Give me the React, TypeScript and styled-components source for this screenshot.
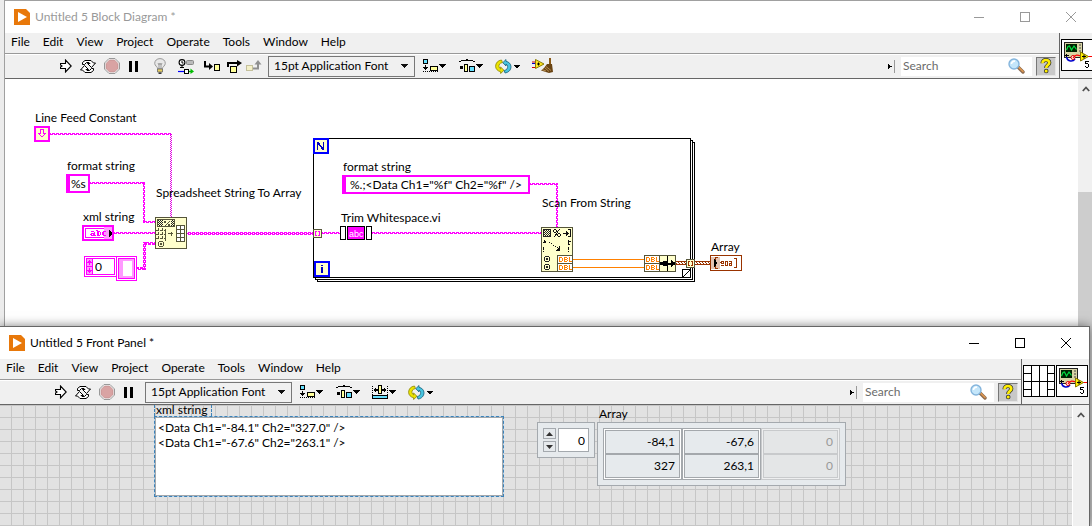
import React from 'react';
import styled, { createGlobalStyle, css } from 'styled-components';

const MAGENTA = '#ff00ff';
const NODE_FILL = '#ffffcc';
const NODE_EDGE = '#55553a';
const BROWN = '#993300';
const ORANGE = '#ff8000';
const BLUE = '#0000ff';

const GlobalStyle = createGlobalStyle`
  * { box-sizing: border-box; }
  body {
    margin: 0;
    background: #c4c4c4;
    font-family: Lato, 'Open Sans', sans-serif;
    font-size: 12px;
    line-height: 16px;
    color: #000;
  }
  button, input, select, textarea { font: inherit; color: inherit; }
`;

/* ---------- windows ---------- */

const Desktop = styled.main`
  position: relative;
  min-height: 100vh;
  overflow: hidden;
  background: #ececec;
`;

const WindowFrame = styled.section<{ $active?: boolean; $x: number; $right: number; $y: number }>`
  position: absolute;
  left: ${p => p.$x}px;
  right: ${p => p.$right}px;
  top: ${p => p.$y}px;
  bottom: 0;
  display: flex;
  flex-direction: column;
  border: 1px solid ${p => (p.$active ? '#666' : '#a0a0a0')};
  border-bottom: 0;
  background: #f0f0f0;
  ${p => p.$active && css`box-shadow: 0 0 10px rgba(0, 0, 0, 0.5);`}
`;

const TitleBar = styled.header<{ $active?: boolean }>`
  display: flex;
  align-items: center;
  height: 32px;
  flex: none;
  padding-left: 9px;
  background: #fff;
  color: ${p => (p.$active ? '#000' : '#999')};
`;

const Title = styled.h1`
  flex: 1;
  margin: 0 0 0 5px;
  font-size: 12px;
  font-weight: 400;
`;

const CaptionButton = styled.button`
  display: flex;
  align-items: center;
  justify-content: center;
  width: 46px;
  height: 32px;
  padding: 0;
  border: 0;
  background: none;
`;

const HeaderRow = styled.div`
  display: flex;
  flex: none;
  height: 46px;
  border-bottom: 1px solid #666;
`;

const HeaderBars = styled.div`
  flex: 1;
  min-width: 0;
`;

const MenuBar = styled.nav`
  display: flex;
  gap: 13px;
  height: 20px;
  padding: 1px 0 0 6px;
`;

const MenuItem = styled.a`
  color: #000;
  text-decoration: none;
`;

const ToolBar = styled.div`
  display: flex;
  align-items: center;
  height: 25px;
  padding-left: 51px;
  border-top: 1px solid #999;
  box-shadow: inset 0 1px #fff;
`;

const ToolButton = styled.button<{ $w: number }>`
  display: flex;
  align-items: center;
  justify-content: center;
  width: ${p => p.$w}px;
  height: 22px;
  flex: none;
  padding: 0;
  border: 0;
  background: none;
`;

const ToolGap = styled.span<{ $w: number }>`
  flex: none;
  width: ${p => p.$w}px;
`;

const FontPicker = styled.span`
  position: relative;
  flex: none;
  width: 147px;
  height: 21px;
  svg { position: absolute; right: 7px; top: 8px; pointer-events: none; }
`;

const FontSelect = styled.select`
  appearance: none;
  width: 100%;
  height: 100%;
  padding: 0 20px 0 5px;
  border: 1px solid #777;
  border-radius: 0;
  background: #f0f0f0;
`;

const SearchArea = styled.div`
  display: flex;
  align-items: center;
  margin-left: auto;
  padding-right: 3px;
`;

const SearchBox = styled.label`
  display: flex;
  align-items: center;
  width: 131px;
  height: 19px;
  margin: 0 4px 0 5px;
  padding-right: 7px;
  background: #fff;
`;

const SearchInput = styled.input`
  flex: 1;
  min-width: 0;
  padding: 0 0 0 2px;
  border: 0;
  outline: 0;
  background: none;
  &::placeholder { color: #6b6b6b; opacity: 1; }
`;

const HelpButton = styled.button`
  display: flex;
  align-items: center;
  justify-content: center;
  width: 20px;
  height: 19px;
  padding: 0;
  border: 1px solid;
  border-color: #777 #e4e4e4 #e4e4e4 #777;
  background: #c8c8c8;
`;

const IconPanes = styled.div`
  display: flex;
  gap: 1px;
  flex: none;
  padding: 6px 1px 0 1px;
  border-left: 1px solid #666;
`;

const Body = styled.div`
  display: flex;
  flex: 1;
  min-height: 0;
`;

const ScrollTrack = styled.div`
  flex: none;
  display: flex;
  flex-direction: column;
  align-items: center;
  width: 17px;
  padding-top: 7px;
  border-left: 1px solid #fff;
  background: #f0f0f0;
`;

const ScrollThumb = styled.div`
  align-self: stretch;
  flex: 1;
  margin-top: 100px;
  background: #cdcdcd;
`;

/* ---------- block diagram ---------- */

const Diagram = styled.div`
  position: relative;
  flex: 1;
  min-width: 0;
  overflow: hidden;
  background: #fff;
`;

const DiagramDrawing = styled.svg`
  position: absolute;
  left: 0;
  top: 0;
  display: block;
`;

const NodeLabel = styled.span<{ $x: number; $y: number }>`
  position: absolute;
  left: ${p => p.$x}px;
  top: ${p => p.$y}px;
  white-space: nowrap;
`;

const StringConstant = styled.input<{ $x: number; $y: number; $w: number; $pad: number }>`
  position: absolute;
  left: ${p => p.$x}px;
  top: ${p => p.$y}px;
  width: ${p => p.$w}px;
  height: 19px;
  padding: 0 0 0 ${p => p.$pad}px;
  border: 2px solid ${MAGENTA};
  border-left-width: 4px;
  border-radius: 0;
  outline: 0;
  background: #fff;
`;

const IndexConstant = styled.input`
  position: absolute;
  left: 89px;
  top: 180px;
  width: 20px;
  height: 16px;
  padding: 0 0 0 1px;
  border: 0;
  outline: 0;
  background: none;
`;

/* ---------- front panel ---------- */

const Panel = styled.div`
  position: relative;
  flex: 1;
  min-width: 0;
  background-color: #e2e2e2;
  background-image:
    linear-gradient(to right, transparent 11px, #c6c6c6 11px),
    linear-gradient(to bottom, transparent 11px, #c6c6c6 11px);
  background-size: 12px 12px;
  background-position: 0 1px;
`;

const PanelItem = styled.div<{ $x: number; $y: number }>`
  position: absolute;
  left: ${p => p.$x}px;
  top: ${p => p.$y}px;
`;

const XmlLabel = styled.label`
  display: block;
  width: 58px;
  height: 11px;
  padding-left: 1px;
  line-height: 9px;
  border: 1px dashed #3c82b8;
  border-top: 0;
  border-bottom: 0;
  white-space: nowrap;
`;

const XmlFrame = styled.div`
  width: 350px;
  height: 81px;
  border: 1px dashed #3c82b8;
  background: #b8d4ea;
`;

const XmlText = styled.textarea`
  display: block;
  width: 100%;
  height: 100%;
  padding: 2px;
  border: 1px solid #a4a8ac;
  outline: 0;
  resize: none;
  overflow: hidden;
  line-height: 15px;
  background: #fff;
`;

const IndexFrame = styled.div`
  display: flex;
  gap: 2px;
  width: 58px;
  height: 36px;
  padding: 5px;
  border: 1px solid #a4a9ae;
  background: #e6eaed;
`;

const Spinner = styled.div`
  display: flex;
  flex-direction: column;
  gap: 2px;
`;

const SpinButton = styled.button`
  display: flex;
  align-items: center;
  justify-content: center;
  width: 13px;
  height: 11px;
  padding: 0;
  border: 1px solid #a4a9ae;
  background: #e6eaed;
`;

const IndexInput = styled.input`
  width: 31px;
  height: 24px;
  padding: 0 3px;
  border: 1px solid #a4a9ae;
  border-radius: 0;
  outline: 0;
  background: #fff;
  text-align: right;
`;

const ArrayFrame = styled.div`
  padding: 5px;
  border: 1px solid #a4a9ae;
  background: #e6eaed;
`;

const ArrayTable = styled.table`
  border-collapse: separate;
  border-spacing: 0;
`;

const ArrayCell = styled.td<{ $dim?: boolean }>`
  width: 79px;
  padding: 0 1px;
  border: 0 solid ${p => (p.$dim ? '#c8cacc' : '#a4a8ac')};
  border-width: 0 1px;
  background: ${p => (p.$dim ? '#eeeff0' : '#fff')};
  tr:first-child > & { border-top-width: 1px; padding-top: 1px; }
  tr:last-child > & { border-bottom-width: 1px; padding-bottom: 1px; }
`;

const CellValue = styled.div<{ $dim?: boolean }>`
  height: 24px;
  padding: 3px 4px 0;
  border: 1px solid ${p => (p.$dim ? '#c8cacc' : '#a4a8ac')};
  background: ${p => (p.$dim ? '#e4e6e7' : '#e6eaed')};
  color: ${p => (p.$dim ? '#999' : '#000')};
  text-align: right;
`;

/* ---------- icons ---------- */

const px = { shapeRendering: 'crispEdges' as const };

/** Draws a small bitmap: each character of a row is looked up in the palette. */
function Bitmap({ rows, palette, x = 0, y = 0 }: {
  rows: string[]; palette: Record<string, string>; x?: number; y?: number;
}) {
  return (
    <g {...px}>
      {rows.flatMap((row, j) =>
        [...row].map((c, i) =>
          palette[c] ? <rect key={`${i}-${j}`} x={x + i} y={y + j} width="1" height="1" fill={palette[c]} /> : null,
        ),
      )}
    </g>
  );
}

const AppLogo = () => (
  <svg width="16" height="16" viewBox="0 0 16 16">
    <path d="M0 0H12L16 4V16H0Z" fill="#e8780a" />
    <path d="M4 3L13 8L4 13Z" fill="#fff" />
  </svg>
);

const DropArrow = () => (
  <svg width="7" height="4" viewBox="0 0 7 4" {...px}><path d="M0 0H7L3.5 4Z" fill="#111" /></svg>
);

const RunIcon = () => (
  <svg width="12" height="14" viewBox="0 0 12 14">
    <path d="M0.5 4.5H5.5V1L11.2 7L5.5 13V9.5H0.5V8L2 7L0.5 6Z" fill="#fff" stroke="#000" strokeWidth="1.1" />
  </svg>
);

const RunLoopIcon = () => (
  <svg width="16" height="15" viewBox="0 0 16 15" fill="#fff" stroke="#000" strokeWidth="1">
    <path d="M2.5 5.500V3.500L5 1.5H11L13.500 4H15.500L11.500 8.500L7.500 4.500H10L9 3.500H6.500L4.500 5.500Z" />
    <path d="M13.500 9.500V11.500L11 13.5H5L2.500 11H.5L4.500 6.500L8.500 10.5H6L7 11.5H9.500L11.500 9.500Z" />
  </svg>
);

const AbortIcon = () => (
  <svg width="16" height="16" viewBox="0 0 16 16">
    <path d="M5 .5H11L15.5 5V11L11 15.5H5L.5 11V5Z" fill="#f4f4f4" stroke="#999" />
    <path d="M5.5 2H10.5L14 5.5V10.5L10.5 14H5.5L2 10.5V5.5Z" fill="#d9a3a3" stroke="#b88" strokeWidth=".6" />
  </svg>
);

const PauseIcon = () => (
  <svg width="10" height="11" viewBox="0 0 10 11" {...px}><path d="M0 0H3V11H0ZM6 0H9V11H6Z" /></svg>
);

const BulbIcon = () => (
  <svg width="12" height="16" viewBox="0 0 12 16">
    <path d="M6 .6C2.8 .6 .7 2.8 .7 5.3C.7 7.8 3.5 8.6 3.8 11H8.2C8.5 8.6 11.3 7.8 11.3 5.3C11.3 2.8 9.2 .6 6 .6Z" fill="#e8e8e8" stroke="#999" />
    <path d="M4 5L5 7L6 5L7 7L8 5M5 7V11M7 7V11" stroke="#888" strokeWidth=".8" fill="none" />
    <path d="M3.5 11H8.5V14H3.5Z" fill="#e8d060" stroke="#666" strokeWidth=".8" />
    <path d="M4.5 15.2H7.5" stroke="#222" strokeWidth="1.4" />
  </svg>
);

const RetainIcon = () => (
  <svg width="16" height="15" viewBox="0 0 16 15">
    <circle cx="4" cy="3.500" r="2.900" fill="#fff" stroke="#000" strokeWidth="1.1" />
    <path d="M4 2V4H5.5M2 8.5H6M4 6.500V9" stroke="#000" fill="none" />
    <rect x="8.5" y="1.5" width="7" height="4" rx="1" fill="#bbb" stroke="#888" />
    <path d="M0 12.5H6" stroke="#00f" strokeWidth="1.2" />
    <rect x="6.5" y="10.5" width="4" height="4" fill="#fff" stroke="#000" />
    <path d="M11 12.5H14" stroke="#0a0" strokeWidth="1.4" />
    <path d="M12.5 9.5L16 12.5L12.5 15Z" fill="#0b0" />
  </svg>
);

const StepIntoIcon = () => (
  <svg width="16" height="12" viewBox="0 0 16 12">
    <path d="M1 1V6.5H6" fill="none" stroke="#000" strokeWidth="2" />
    <path d="M5 3L9 6.5L5 10Z" />
    <rect x="10.5" y="4.5" width="5" height="6" fill="#ffff99" stroke="#000" />
  </svg>
);

const StepOverIcon = () => (
  <svg width="15" height="13" viewBox="0 0 15 13">
    <path d="M1 7V3H11" fill="none" stroke="#000" strokeWidth="2" />
    <path d="M10 0L15 3L10 6.5Z" />
    <rect x="3.5" y="6.5" width="6" height="6" fill="#ffff99" stroke="#000" />
  </svg>
);

const StepOutIcon = () => (
  <svg width="16" height="12" viewBox="0 0 16 12">
    <rect x=".5" y="5.5" width="6" height="5" fill="#f4f0c8" stroke="#c4c09c" />
    <path d="M7 8.5H12V4" fill="none" stroke="#909090" strokeWidth="2" />
    <path d="M8.5 4.5L12 0L15.5 4.5Z" fill="#909090" />
  </svg>
);

const AlignIcon = () => (
  <svg width="24" height="14" viewBox="0 0 24 14" {...px}>
    <rect x=".5" y=".5" width="4" height="4" fill="#66e0ff" stroke="#000" />
    <path d="M2 6H3V8H5V9H4V10H3V11H2V10H1V9H0V8H2Z" />
    <path d="M0 12.5H15" stroke="#000" strokeDasharray="1 1" />
    <rect x="7.5" y="7.5" width="7" height="4" fill="#ffff99" stroke="#000" />
    <path d="M16 5H23L19.5 9Z" />
  </svg>
);

const DistributeIcon = () => (
  <svg width="24" height="14" viewBox="0 0 24 14" {...px}>
    <path d="M0 3V2H2V1H7V0H9V1H14V2H16V3H14V2H2V3Z" />
    <rect x="1" y="7" width="3" height="3" />
    <rect x="5.500" y="5.500" width="3" height="7" fill="#ffff99" stroke="#000" />
    <rect x="10.500" y="7.500" width="5" height="5" fill="#66e0ff" stroke="#000" />
    <path d="M17 5H24L20.500 9Z" />
  </svg>
);

const ResizeIcon = () => (
  <svg width="24" height="14" viewBox="0 0 24 14" {...px}>
    <path d="M.5 1V10M15.500 1V10" stroke="#000" strokeDasharray="1 1" />
    <path d="M1 5H2V4H3V3H4V4H6V6H4V7H3V6H2V5ZM15 5H14V4H13V3H12V4H10V6H12V7H13V6H14V5Z" />
    <rect x="6.500" y=".5" width="3" height="8" fill="#ffff99" stroke="#000" />
    <rect x=".5" y="10.500" width="15" height="3" fill="#66e0ff" stroke="#000" />
    <path d="M17 5H24L20.500 9Z" />
  </svg>
);

const ReorderIcon = () => (
  <svg width="26" height="15" viewBox="0 0 26 15">
    <path d="M6.500 1L7.500 3.500C4.500 4 3.800 6 4 7.500C4.100 8.700 4.800 9.600 5.600 10V8L9 11.300L5.600 14.500V12.700C2.800 12.200 .6 10 .6 7.300C.6 4 3 1.300 6.500 1Z" fill="#ece400" stroke="#8a8400" strokeWidth=".8" />
    <path d="M10 14L9.200 11.500C12 11 12.800 9 12.600 7.500C12.500 6.300 11.800 5.400 11 5V7L7.800 3.700L11 .5V2.300C13.800 2.800 16 5 16 7.700C16 11 13.500 13.700 10 14Z" fill="#48c4e0" stroke="#14607a" strokeWidth=".8" />
    <path d="M18.500 6H25.500L22 10Z" {...px} />
  </svg>
);

const CleanUpIcon = () => (
  <svg width="22" height="16" viewBox="0 0 22 16">
    <path d="M0 4H4M0 9.500H4" stroke="#c00" strokeWidth="1.200" />
    <path d="M0 5.500H3" stroke="#00c" />
    <path d="M3.500 1.500L12 6L3.500 10.500Z" fill="#ffe820" stroke="#8a7a00" />
    <path d="M5 6H8M6.500 4.500V7.500" stroke="#000" />
    <path d="M17 0H19V7H17Z" fill="#8a5a18" />
    <path d="M15 6H20L21 14L17 15L9 12.500L12 10Z" fill="#6a4414" />
    <path d="M10 11.500L14 13M12.500 9.500L17 13.500M14 8.500L19 12.500" stroke="#c8a060" fill="none" strokeWidth=".8" />
  </svg>
);

const MagnifierIcon = () => (
  <svg width="17" height="16" viewBox="0 0 17 16">
    <path d="M10 9L15 14" stroke="#8a6a50" strokeWidth="3.400" strokeLinecap="round" />
    <path d="M11 9.500L15 13.500" stroke="#e09850" strokeWidth="1.600" strokeLinecap="round" />
    <circle cx="6" cy="6" r="5" fill="#c4e6fa" stroke="#84b4dc" strokeWidth="1.400" />
    <path d="M3.500 6C3.500 4 5 3 7 3.200" stroke="#fff" strokeWidth="1.600" fill="none" />
  </svg>
);

const HelpIcon = () => (
  <svg width="12" height="16" viewBox="0 0 12 16">
    <path d="M2.500 5.200C2.300 1 9.500 1 9.300 4.800C9.200 7.200 6.300 7 6.200 10" fill="none" stroke="#333" strokeWidth="4" />
    <circle cx="6.200" cy="13" r="2.300" fill="#333" />
    <path d="M2.500 5.200C2.300 1 9.500 1 9.300 4.800C9.200 7.200 6.300 7 6.200 10" fill="none" stroke="#ffee00" strokeWidth="2.600" />
    <circle cx="6.200" cy="13" r="1.500" fill="#ffee00" />
  </svg>
);

const ViIcon = () => (
  <svg width="32" height="32" viewBox="0 0 32 32">
    <rect x=".5" y=".5" width="31" height="31" fill="#fff" stroke="#000" {...px} />
    <rect x="3.500" y="3.500" width="18" height="15" fill="#d8d4a4" stroke="#222" {...px} />
    <rect x="5" y="5" width="11" height="8" fill="#002200" {...px} />
    <path d="M5.500 11L7 7.500L8.500 7L10.500 11L13 7L15.500 10.500" fill="none" stroke="#00e040" strokeWidth="1.200" />
    <path d="M18 6H20M18 9H20M18 12H20" stroke="#444" />
    <path d="M5.500 15V18M3.500 16.500H8" stroke="#000" />
    <path d="M5.500 18C6.500 23 12 23 14 20" fill="none" stroke="#0000cc" strokeWidth="1.400" />
    <circle cx="12" cy="18.500" r="2" fill="#fff" stroke="#d00" />
    <path d="M12 19C14 15 17 16 20 17" fill="none" stroke="#f00" strokeWidth="1.300" />
    <path d="M27 17.500H31" stroke="#f00" {...px} />
    <path d="M19.500 13L27.500 17.500L19.500 22Z" fill="#ffee00" stroke="#8a7a00" />
    <path d="M21 17.500H25M23 15.500V19.500" stroke="#000" />
    <Bitmap x={24} y={22} palette={{ k: '#000' }} rows={['kkkk', 'k...', 'kkk.', '...k', '...k', 'k..k', '.kk.']} />
  </svg>
);

const ConnectorPane = () => (
  <svg width="32" height="32" viewBox="0 0 32 32" {...px}>
    <path d="M.5 .5H31.500V31.500H.5ZM8.500 0V32M16.500 0V32M24.500 0V32M0 16.500H32M0 8.500H8M0 24.500H8M24 8.500H32M24 24.500H32" fill="#fff" stroke="#000" />
  </svg>
);

const ScrollUp = () => (
  <svg width="8" height="6" viewBox="0 0 8 6"><path d="M.8 5L4 1.500L7.200 5" fill="none" stroke="#505050" strokeWidth="1.800" /></svg>
);

/* ---------- shared window header ---------- */

const MENUS = ['File', 'Edit', 'View', 'Project', 'Operate', 'Tools', 'Window', 'Help'];

type Tool = { name: string; w: number; icon: React.ReactNode };

const RUN_TOOLS: Tool[] = [
  { name: 'Run', w: 20, icon: <RunIcon /> },
  { name: 'Run Continuously', w: 24, icon: <RunLoopIcon /> },
  { name: 'Abort Execution', w: 24, icon: <AbortIcon /> },
  { name: 'Pause', w: 19, icon: <PauseIcon /> },
];

const DEBUG_TOOLS: Tool[] = [
  { name: 'Highlight Execution', w: 24, icon: <BulbIcon /> },
  { name: 'Retain Wire Values', w: 28, icon: <RetainIcon /> },
  { name: 'Step Into', w: 24, icon: <StepIntoIcon /> },
  { name: 'Step Over', w: 20, icon: <StepOverIcon /> },
  { name: 'Step Out', w: 20, icon: <StepOutIcon /> },
];

const ALIGN: Tool = { name: 'Align Objects', w: 36, icon: <AlignIcon /> };
const DISTRIBUTE: Tool = { name: 'Distribute Objects', w: 36, icon: <DistributeIcon /> };
const RESIZE: Tool = { name: 'Resize Objects', w: 36, icon: <ResizeIcon /> };
const REORDER: Tool = { name: 'Reorder', w: 38, icon: <ReorderIcon /> };
const CLEANUP: Tool = { name: 'Clean Up Diagram', w: 32, icon: <CleanUpIcon /> };

const Tools = ({ items }: { items: Tool[] }) => (
  <>
    {items.map(t => (
      <ToolButton key={t.name} type="button" aria-label={t.name} $w={t.w}>{t.icon}</ToolButton>
    ))}
  </>
);

function WindowHeader({ title, active, debug, layout, panes }: {
  title: string; active?: boolean; debug?: boolean; layout: Tool[]; panes: React.ReactNode;
}) {
  const ink = active ? '#000' : '#999';
  return (
    <>
      <TitleBar $active={active}>
        <AppLogo />
        <Title>{title}</Title>
        <CaptionButton type="button" aria-label="Minimize">
          <svg width="10" height="10" {...px}><path d="M0 5.500H10" stroke={ink} /></svg>
        </CaptionButton>
        <CaptionButton type="button" aria-label="Maximize">
          <svg width="10" height="10" {...px}><rect x=".5" y=".5" width="9" height="9" fill="none" stroke={ink} /></svg>
        </CaptionButton>
        <CaptionButton type="button" aria-label="Close">
          <svg width="10" height="10"><path d="M0 0L10 10M10 0L0 10" stroke={ink} /></svg>
        </CaptionButton>
      </TitleBar>
      <HeaderRow>
        <HeaderBars>
          <MenuBar>{MENUS.map(m => <MenuItem key={m} href="#">{m}</MenuItem>)}</MenuBar>
          <ToolBar>
            <Tools items={RUN_TOOLS} />
            {debug ? <><ToolGap $w={5} /><Tools items={DEBUG_TOOLS} /><ToolGap $w={4} /></> : <ToolGap $w={7} />}
            <FontPicker>
              <FontSelect aria-label="Text settings"><option>15pt Application Font</option></FontSelect>
              <DropArrow />
            </FontPicker>
            <ToolGap $w={2} />
            <Tools items={layout} />
            <SearchArea>
              <svg width="8" height="13" viewBox="0 0 8 13" {...px}>
                <path d="M0 4L4 6.500L0 9Z" /><path d="M6.500 0V13" stroke="#999" />
              </svg>
              <SearchBox>
                <SearchInput type="text" placeholder="Search" aria-label="Search" />
                <MagnifierIcon />
              </SearchBox>
              <HelpButton type="button" aria-label="Show Context Help"><HelpIcon /></HelpButton>
            </SearchArea>
          </ToolBar>
        </HeaderBars>
        <IconPanes>{panes}</IconPanes>
      </HeaderRow>
    </>
  );
}

/* ---------- diagram drawing (origin at the window's 5,79 corner) ---------- */

const M = { m: MAGENTA };

const WirePatterns = () => (
  <defs>
    <pattern id="string-h" width="4" height="2" patternUnits="userSpaceOnUse" y="1">
      <path d="M0 0H3V1H0ZM2 1H4V2H2ZM0 1H1V2H0Z" fill={MAGENTA} />
    </pattern>
    <pattern id="string-h-even" width="4" height="2" patternUnits="userSpaceOnUse">
      <path d="M0 0H3V1H0ZM2 1H4V2H2ZM0 1H1V2H0Z" fill={MAGENTA} />
    </pattern>
    <pattern id="string-v" width="2" height="4" patternUnits="userSpaceOnUse">
      <path d="M0 0H1V3H0ZM1 2H2V4H1ZM1 0H2V1H1Z" fill={MAGENTA} />
    </pattern>
    <pattern id="string-v-odd" width="2" height="4" patternUnits="userSpaceOnUse" x="1">
      <path d="M0 0H1V3H0ZM1 2H2V4H1ZM1 0H2V1H1Z" fill={MAGENTA} />
    </pattern>
    <pattern id="string-v-thin" width="2" height="2" patternUnits="userSpaceOnUse">
      <path d="M1 0H2V1H1ZM0 1H1V2H0Z" fill="#e000e0" />
    </pattern>
    <pattern id="array-h" width="4" height="3" patternUnits="userSpaceOnUse" y="232">
      <path d="M0 0H3V1H0ZM0 2H3V3H0ZM2 1H4V2H2ZM0 1H1V2H0Z" fill={MAGENTA} />
    </pattern>
    <pattern id="array-v" width="3" height="4" patternUnits="userSpaceOnUse" x="143">
      <path d="M0 0H1V3H0ZM2 0H3V3H2ZM1 2H2V4H1ZM1 0H2V1H1Z" fill={MAGENTA} />
    </pattern>
    <pattern id="cluster" width="3" height="4" patternUnits="userSpaceOnUse" y="261">
      <path d="M0 0H3V1H0ZM0 3H3V4H0ZM0 1H1V2H0ZM1 2H2V3H1Z" fill={BROWN} />
    </pattern>
    <pattern id="dots" width="2" height="2" patternUnits="userSpaceOnUse">
      <path d="M0 0H1V1H0ZM1 1H2V2H1Z" fill="#222" />
    </pattern>
  </defs>
);

const Wires = () => (
  <g {...px}>
    <rect x="50" y="133" width="121" height="2" fill="url(#string-h)" />
    <rect x="170" y="133" width="2" height="84" fill="url(#string-v-thin)" />
    <rect x="90" y="182" width="54" height="2" fill="url(#string-h-even)" />
    <rect x="143" y="182" width="2" height="40" fill="url(#string-v-odd)" />
    <rect x="143" y="221" width="12" height="2" fill="url(#string-h)" />
    <rect x="114" y="232" width="41" height="2" fill="url(#string-h-even)" />
    <rect x="137" y="267" width="8" height="3" fill="url(#array-h)" />
    <rect x="143" y="242" width="3" height="28" fill="url(#array-v)" />
    <rect x="143" y="242" width="12" height="3" fill="url(#array-h)" />
    <rect x="187" y="232" width="126" height="3" fill="url(#array-h)" />
    <rect x="322" y="232" width="18" height="2" fill="url(#string-h-even)" />
    <rect x="372" y="232" width="169" height="2" fill="url(#string-h-even)" />
    <rect x="530" y="183" width="28" height="2" fill="url(#string-h)" />
    <rect x="556" y="183" width="2" height="44" fill="url(#string-v)" />
    <path d="M573 259.500H644M573 267.500H644" stroke={ORANGE} />
    <rect x="676" y="261" width="10" height="4" fill="url(#cluster)" />
    <rect x="695" y="261" width="15" height="4" fill="url(#cluster)" />
  </g>
);

const ForLoop = () => (
  <g {...px}>
    <path d="M317.500 279V281.500H694.500V142.500H692" fill="none" stroke="#000" />
    <path d="M315.500 277V279.500H692.500V140.500H690" fill="none" stroke="#000" />
    <rect x="313.500" y="138.500" width="377" height="139" fill="none" stroke="#000" />
    <path d="M682.500 277V269.500H690M682.500 277.500L690.500 269.500" fill="none" stroke="#000" />
    <rect x="314" y="139" width="14" height="14" fill={NODE_FILL} stroke={BLUE} strokeWidth="2" />
    <rect x="315" y="262" width="14" height="14" fill={NODE_FILL} stroke={BLUE} strokeWidth="2" />
    <Bitmap x={317} y={142} palette={{ b: '#0000c0' }}
      rows={['bb....b', 'bbb...b', 'bbb...b', 'b.bb..b', 'b..bb.b', 'b...bbb', 'b...bbb', 'b....bb']} />
    <Bitmap x={321} y={265} palette={{ b: '#0000c0' }} rows={['bb', '..', 'bb', 'bb', 'bb', 'bb', 'bb', 'bb']} />
  </g>
);

const Tunnel = ({ x, y, color }: { x: number; y: number; color: string }) => (
  <g {...px}>
    <rect x={x + .5} y={y + .5} width="8" height="8" fill={NODE_FILL} stroke={NODE_EDGE} />
    <path d={`M${x + 4} ${y + 2.500}H${x + 2.500}V${y + 6.500}H${x + 4}M${x + 5} ${y + 2.500}H${x + 6.500}V${y + 6.500}H${x + 5}`} fill="none" stroke={color} />
  </g>
);

const LineFeedNode = () => (
  <g {...px}>
    <rect x="35" y="127" width="14" height="14" fill={NODE_FILL} stroke={MAGENTA} strokeWidth="2" />
    <Bitmap x={38} y={129} palette={M}
      rows={['..mmmm..', '..m..m..', '..m..m..', '..m..m..', 'mmm..mmm', '.m....m.', '..m..m..', '...mm...']} />
  </g>
);

const StringTerminal = () => (
  <g {...px}>
    <rect x="83" y="226" width="30" height="14" fill="#fff" stroke={MAGENTA} strokeWidth="2" />
    <rect x="85.500" y="228.500" width="25" height="9" fill="#fff" stroke={MAGENTA} />
    <rect x="104" y="227" width="8" height="12" fill="#ff99ff" />
    <Bitmap x={90} y={230} palette={M}
      rows={['......mm........', '.mmm...mmm...mmm', '....m..mm.m.mm..', '.mmmm..mm.m.mm..', 'mm.mm..mm.m.mm..', '.mmmmm.mmm...mmm']} />
    <path d="M109 230H110V231H111V232H112V235H111V236H110V237H109Z" />
  </g>
);

const ArrayConstant = () => (
  <g {...px}>
    <rect x="84.500" y="256.500" width="32" height="20" fill="#fff" stroke={MAGENTA} />
    <rect x="86.500" y="258.500" width="28" height="16" fill="#fff" stroke={MAGENTA} />
    <rect x="87" y="259" width="5" height="15" fill="#ff99ff" />
    <path d="M86 266.500H92M92.500 258V275M86.500 258V275" stroke={MAGENTA} />
    <path d="M89.500 260L92 263H90V265H89V263H87ZM89.500 273L92 270H90V268H89V270H87Z" fill={MAGENTA} />
    <rect x="116.500" y="256.500" width="20" height="24" fill="#fff" stroke={MAGENTA} />
    <rect x="118.500" y="258.500" width="16" height="20" fill="#ff99ff" stroke={MAGENTA} />
    <rect x="123" y="261" width="9" height="15" fill="#fff" />
  </g>
);

const SpreadsheetNode = () => (
  <g {...px}>
    <rect x="155.500" y="217.500" width="31" height="31" fill={NODE_FILL} stroke={NODE_EDGE} />
    <rect x="157.500" y="219.500" width="17" height="7" fill="url(#dots)" stroke={NODE_EDGE} />
    <rect x="163" y="220" width="8" height="6" fill={NODE_FILL} />
    <path d="M164 221H166V223H164ZM169 221H170V222H169V223H168V224H167V225H166V226H165V225H166V224H167V223H168V222H169ZM168 224H170V226H168Z" fill={NODE_EDGE} />
    <path d="M158.500 228V240M162.500 228V240M156 230.500H165M156 234.500H165M156 238.500H165" stroke={NODE_EDGE} strokeDasharray="3 1" fill="none" />
    <path d="M165.500 229V241M168 233.500H173M171 231.500V235.500" stroke={NODE_EDGE} />
    <path d="M176.500 225.500H184.500V241.500H176.500ZM180.500 225V241M176 229.500H184M176 233.500H184M176 237.500H184" fill="#fff" stroke={NODE_EDGE} />
    <Bitmap x={158} y={241} palette={{ k: NODE_EDGE }} rows={['.kkkk.', 'k....k', 'k.kk.k', 'k.kk.k', 'k....k', '.kkkk.']} />
  </g>
);

const TrimNode = () => (
  <g>
    <g {...px}>
      <rect x="340.500" y="226.500" width="5" height="13" fill="#fff" stroke="#000" />
      <rect x="347.500" y="226.500" width="17" height="13" fill={MAGENTA} stroke="#000" />
      <rect x="366.500" y="226.500" width="5" height="13" fill="#fff" stroke="#000" />
    </g>
    <text x="349" y="237" fill="#fff" fontFamily="Liberation Sans, sans-serif" fontSize="9">abc</text>
  </g>
);

const DblTerminal = ({ x, y }: { x: number; y: number }) => (
  <g {...px}>
    <rect x={x + .5} y={y + .5} width="15" height="8" fill="#fff" stroke={NODE_EDGE} />
    <Bitmap x={x + 2} y={y + 2} palette={{ o: ORANGE }}
      rows={['ooo..ooo..o..', 'o..o.o..o.o..', 'o..o.ooo..o..', 'o..o.o..o.o..', 'ooo..ooo..ooo']} />
  </g>
);

const ScanNode = () => (
  <g {...px}>
    <rect x="541.500" y="227.500" width="31" height="44" fill={NODE_FILL} stroke={NODE_EDGE} />
    <rect x="543.500" y="229.500" width="7" height="7" fill="url(#dots)" stroke="#222" />
    <Bitmap x={553} y={229} palette={{ k: '#111' }}
      rows={['.kk...k........kkk', 'k..k.k...........k', 'k..kk........k...k', '.kk.k........kk..k', '...k.kk...kkkkkk.k', '..kkk..k.....kk..k', '..k.k..k.....k...k', '.k...kk........kkk']} />
    <Bitmap x={543} y={240} palette={{ k: '#111' }}
      rows={['.k.......................k..', '.kk......................kkk', 'kkk...k..................k..', '........k................k..', '.........................kk.', '..........k.................', '............k...k...........', 'k.............k.k........k..', 'k..............kk........k..', 'k.............kkk........k..', '.............kkkk...........', 'k........................k..']} />
    <Bitmap x={544} y={256} palette={{ k: '#222' }} rows={['.kkkk.', 'k....k', 'k.kk.k', 'k.kk.k', 'k....k', '.kkkk.']} />
    <Bitmap x={544} y={264} palette={{ k: '#222' }} rows={['.kkkk.', 'k....k', 'k.kk.k', 'k.kk.k', 'k....k', '.kkkk.']} />
    <DblTerminal x={557} y={255} />
    <DblTerminal x={557} y={263} />
  </g>
);

const BundleNode = () => (
  <g {...px}>
    <rect x="644.500" y="255.500" width="31" height="16" fill={NODE_FILL} stroke={NODE_EDGE} />
    <DblTerminal x={644} y={255} />
    <DblTerminal x={644} y={263} />
    <path d="M667.500 256V271" stroke="#000" />
    <path d="M660 262H663V261H668V263H671V260H672V261H673V262H675V265H673V266H672V267H671V265H668V266H663V265H660Z" />
  </g>
);

const ArrayTerminal = () => (
  <g {...px}>
    <rect x="710.500" y="255.500" width="31" height="15" fill="#fff" stroke={BROWN} />
    <rect x="711" y="257" width="9" height="12" fill="#e4c4b4" />
    <path d="M718 257.500H715.500V268.500H718M734 258.500H736.500V267.500H734" fill="none" stroke={BROWN} />
    <path d="M714 259H715V260H716V262H717V264H716V266H715V267H714Z" />
    <Bitmap x={720} y={261} palette={{ b: BROWN }}
      rows={['.bbb.bbb.bbb', 'bb.b.b.b...b', '.bbb.b.b.bbb', '.....b.b.b.b', '.bbb.bbb.bbb']} />
  </g>
);

const LABELS = [
  { text: 'Line Feed Constant', x: 30, y: 31 },
  { text: 'format string', x: 62, y: 79 },
  { text: 'xml string', x: 78, y: 130 },
  { text: 'Spreadsheet String To Array', x: 151, y: 106 },
  { text: 'format string', x: 338, y: 80 },
  { text: 'Trim Whitespace.vi', x: 336, y: 131 },
  { text: 'Scan From String', x: 537, y: 116 },
  { text: 'Array', x: 706, y: 160 },
];

const VALUES = [
  ['-84,1', '-67,6', '0'],
  ['327', '263,1', '0'],
];

export default function App() {
  return (
    <>
      <GlobalStyle />
      <Desktop>
        <WindowFrame $x={4} $right={-3} $y={0}>
          <WindowHeader title="Untitled 5 Block Diagram *" debug
            layout={[ALIGN, DISTRIBUTE, REORDER, CLEANUP]} panes={<ViIcon />} />
          <Body>
            <Diagram>
              <DiagramDrawing width="760" height="220" viewBox="5 79 760 220">
                <WirePatterns />
                <ForLoop />
                <Wires />
                <Tunnel x={313} y={229} color={MAGENTA} />
                <Tunnel x={686} y={259} color={BROWN} />
                <LineFeedNode />
                <StringTerminal />
                <ArrayConstant />
                <SpreadsheetNode />
                <TrimNode />
                <ScanNode />
                <BundleNode />
                <ArrayTerminal />
              </DiagramDrawing>
              {LABELS.map(l => <NodeLabel key={`${l.x}-${l.y}`} $x={l.x} $y={l.y}>{l.text}</NodeLabel>)}
              <StringConstant aria-label="format string" defaultValue="%s" $x={61} $y={95} $w={24} $pad={1} />
              <StringConstant aria-label="scan format string" defaultValue={'%.;<Data Ch1="%f" Ch2="%f" />'} $x={337} $y={96} $w={188} $pad={4} />
              <IndexConstant aria-label="array index" defaultValue="0" />
            </Diagram>
            <ScrollTrack><ScrollUp /><ScrollThumb /></ScrollTrack>
          </Body>
        </WindowFrame>

        <WindowFrame $active $x={-1} $right={2} $y={326}>
          <WindowHeader title="Untitled 5 Front Panel *" active
            layout={[ALIGN, DISTRIBUTE, RESIZE, REORDER]} panes={<><ConnectorPane /><ViIcon /></>} />
          <Body>
            <Panel>
              <PanelItem $x={154} $y={0}><XmlLabel htmlFor="xml">xml string</XmlLabel></PanelItem>
              <PanelItem $x={154} $y={11}>
                <XmlFrame>
                  <XmlText id="xml" spellCheck={false}
                    defaultValue={'<Data Ch1="-84.1" Ch2="327.0" />\n<Data Ch1="-67.6" Ch2="263.1" />'} />
                </XmlFrame>
              </PanelItem>
              <PanelItem $x={537} $y={17}>
                <IndexFrame>
                  <Spinner>
                    <SpinButton type="button" aria-label="Increment index">
                      <svg width="7" height="4" viewBox="0 0 7 4"><path d="M0 4L3.500 0L7 4Z" fill="#333" /></svg>
                    </SpinButton>
                    <SpinButton type="button" aria-label="Decrement index">
                      <svg width="7" height="4" viewBox="0 0 7 4"><path d="M0 0L3.500 4L7 0Z" fill="#333" /></svg>
                    </SpinButton>
                  </Spinner>
                  <IndexInput aria-label="Array index" defaultValue="0" />
                </IndexFrame>
              </PanelItem>
              <PanelItem $x={599} $y={1}>Array</PanelItem>
              <PanelItem $x={597} $y={17}>
                <ArrayFrame>
                  <ArrayTable aria-label="Array">
                    <tbody>
                      {VALUES.map((row, r) => (
                        <tr key={r}>
                          {row.map((v, c) => (
                            <ArrayCell key={c} $dim={c === 2}><CellValue $dim={c === 2}>{v}</CellValue></ArrayCell>
                          ))}
                        </tr>
                      ))}
                    </tbody>
                  </ArrayTable>
                </ArrayFrame>
              </PanelItem>
            </Panel>
            <ScrollTrack><ScrollUp /></ScrollTrack>
          </Body>
        </WindowFrame>
      </Desktop>
    </>
  );
}
